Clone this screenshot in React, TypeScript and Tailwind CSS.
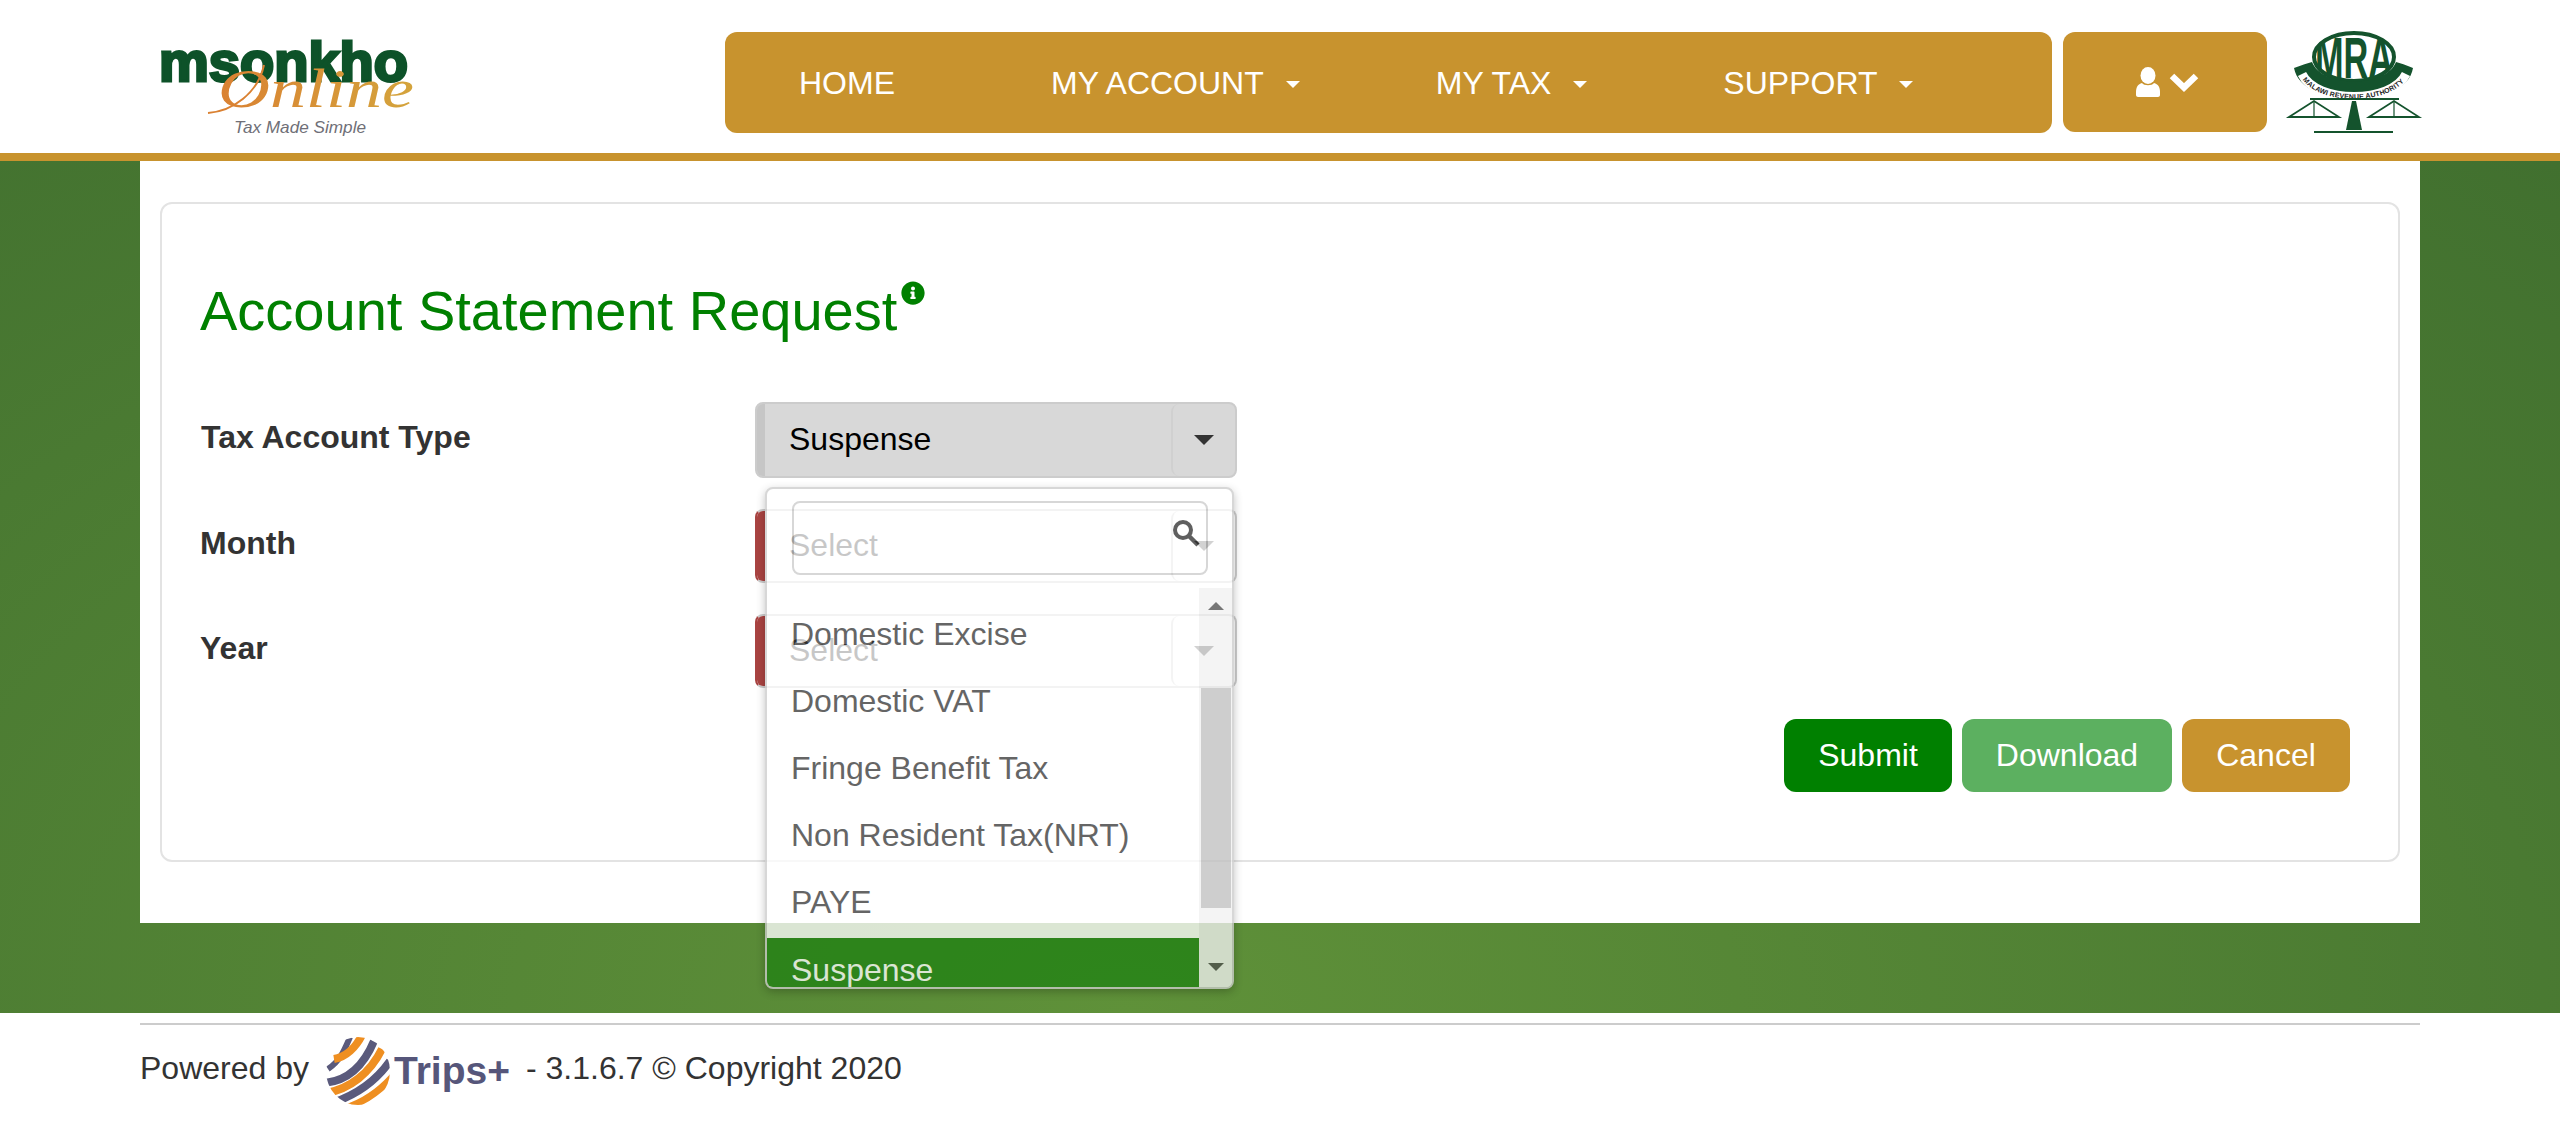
import React from "react";
import { FaInfoCircle } from "react-icons/fa";

const OPTIONS = ["Domestic Excise", "Domestic VAT", "Fringe Benefit Tax", "Non Resident Tax(NRT)", "PAYE"];

function MsonkhoLogo() {
  return (
    <svg viewBox="0 0 255 92" className="w-[255px] h-[92px] shrink-0 ml-[158px] overflow-visible">
      <defs>
        <linearGradient id="onl" x1="0" x2="1" y1="0" y2="0">
          <stop offset="0" stopColor="#da8132" />
          <stop offset="1" stopColor="#d4a43c" />
        </linearGradient>
      </defs>
      <text x="1" y="38" fontFamily="'Liberation Sans', sans-serif" fontWeight="700" fontSize="56" textLength="249" lengthAdjust="spacingAndGlyphs" fill="#0d5229" stroke="#0d5229" strokeWidth="3">msonkho</text>
      <text x="60" y="64" fontFamily="'Liberation Serif', serif" fontStyle="italic" fontSize="54" textLength="196" lengthAdjust="spacingAndGlyphs" fill="url(#onl)">Online</text>
      <path d="M50 70 C75 68 100 50 106 22" fill="none" stroke="#da8132" strokeWidth="2" />
      <text x="76" y="90" fontFamily="'Liberation Sans', sans-serif" fontStyle="italic" fontSize="17" textLength="132" lengthAdjust="spacingAndGlyphs" fill="#6f6f77">Tax Made Simple</text>
    </svg>
  );
}

function MraLogo() {
  return (
    <svg viewBox="0 0 132 101" className="w-[132px] h-[101px] shrink-0 ml-[21px] overflow-visible">
      <defs>
        <clipPath id="mraClip">
          <ellipse cx="66" cy="25" rx="42" ry="25" />
        </clipPath>
      </defs>
      <ellipse cx="66" cy="25" rx="40" ry="24" fill="#fff" stroke="#14532d" strokeWidth="4" />
      <g clipPath="url(#mraClip)">
        <text x="66" y="46" textAnchor="middle" fontFamily="'Liberation Sans', sans-serif" fontWeight="700" fontSize="58" textLength="78" lengthAdjust="spacingAndGlyphs" fill="#14532d">MRA</text>
      </g>
      <path d="M6 36 C14 33 20 31 24 30 C34 56 98 56 108 30 C112 31 118 33 125 36 C118 78 14 78 6 36Z" fill="#14532d" />
      <path id="mraArc" d="M14 42 C28 72 104 72 118 42" fill="none" stroke="#fff" strokeWidth="9" />
      <text fontFamily="'Liberation Sans', sans-serif" fontWeight="700" fontSize="7" fill="#222" dy="2.5">
        <textPath href="#mraArc" startOffset="4%">MALAWI REVENUE AUTHORITY</textPath>
      </text>
      <path d="M22 67H111" stroke="#14532d" strokeWidth="2" />
      <path d="M64 69H68L74 98H58Z" fill="#14532d" />
      <path d="M26 100H105" stroke="#14532d" strokeWidth="2" />
      <path d="M1 85L26 69L51 85ZM81 85L106 69L131 85Z" fill="none" stroke="#14532d" strokeWidth="1.8" />
      <path d="M26 69V85M106 69V85" stroke="#14532d" strokeWidth="1.2" />
    </svg>
  );
}

function TripsLogo() {
  return (
    <span className="inline-flex items-center ml-[17px] mr-[16px] mt-[6px]">
      <svg viewBox="0 0 64 68" className="w-[64px] h-[68px] shrink-0">
        <defs>
          <clipPath id="egg">
            <ellipse cx="32" cy="34" rx="32" ry="34" />
          </clipPath>
        </defs>
        <g clipPath="url(#egg)" fill="none">
          <path d="M2 32C14 24 18 14 24 0" stroke="#5a5a7c" strokeWidth="6" />
          <path d="M8 22C20 20 30 10 36 -2" stroke="#ef8f21" strokeWidth="8" />
          <path d="M-2 46C22 44 38 28 48 4" stroke="#5a5a7c" strokeWidth="8" />
          <path d="M0 56C24 52 44 36 56 12" stroke="#ef8f21" strokeWidth="8" />
          <path d="M6 66C30 58 50 44 64 24" stroke="#5a5a7c" strokeWidth="8" />
          <path d="M16 72C38 66 54 54 68 38" stroke="#ef8f21" strokeWidth="7" />
        </g>
      </svg>
      <span className="ml-[4px] text-[39px] leading-[38px] font-bold text-[#56567a]">Trips+</span>
    </span>
  );
}

function NavItem({ label, caret = true, extra = "" }: { label: string; caret?: boolean; extra?: string }) {
  return (
    <span className={`inline-flex items-center text-white text-[32px] leading-[36px] ${extra}`}>
      {label}
      {caret && <span className="ml-[22px] mt-[4px] w-0 h-0 border-x-[7px] border-t-[7px] border-x-transparent border-t-white" />}
    </span>
  );
}

function SelectBox({ text, error, height }: { text: string; error?: boolean; height: string }) {
  return (
    <div className={`w-[482px] ${height} flex rounded-lg overflow-hidden border-2 ${error ? "border-[#ccc] border-l-[#a94442] bg-white" : "border-[#ccc] bg-[#d8d8d8]"}`}>
      <div className={`w-[8px] shrink-0 ${error ? "bg-[#a94442]" : "bg-[#c6c6c6]"}`} />
      <div className="flex-1 pl-[24px] pb-[2px] flex items-center text-[32px] text-black">{text}</div>
      <div className="w-[64px] shrink-0 flex items-center justify-center border-l-2 border-[#d0d0d0] rounded-l-lg">
        <span className="w-0 h-0 border-x-[10px] border-t-[10px] border-x-transparent border-t-[#333]" />
      </div>
    </div>
  );
}

function Dropdown() {
  return (
    <div className="absolute left-[10px] top-[85px] w-[469px] h-[502px] z-10 flex flex-col bg-white border-2 border-[#ccc] rounded-lg overflow-hidden shadow-[0_3px_8px_rgba(0,0,0,0.3)] opacity-[0.78]">
      <div className="h-[99px] shrink-0 relative pt-[12px] pl-[25px]">
        <div className="w-[416px] h-[74px] border-2 border-[#ccc] rounded-lg bg-white flex justify-end pt-[16px] pr-[6px]">
          <svg viewBox="0 0 28 28" className="w-[28px] h-[28px]">
            <circle cx="11" cy="11" r="8" fill="none" stroke="#333" strokeWidth="4" />
            <path d="M17 17L26 26" stroke="#333" strokeWidth="4.5" />
          </svg>
        </div>
      </div>
      <div className="flex-1 min-h-0 flex">
        <div className="flex-1 pt-[14px] overflow-hidden text-[32px] leading-[65px] text-[#3b3b3b]">
          {OPTIONS.map((o) => (
            <div key={o} className="pl-[24px] h-[67px]">{o}</div>
          ))}
          <div className="pl-[24px] h-[67px] mt-[1px] bg-[#218214] text-white">Suspense</div>
        </div>
        <div className="w-[33px] shrink-0 bg-[#f1f1f1] flex flex-col items-center">
          <div className="h-[100px] w-full flex justify-center pt-[14px]">
            <span className="w-0 h-0 border-x-[8px] border-b-[8px] border-x-transparent border-b-[#505050]" />
          </div>
          <div className="w-[30px] h-[220px] bg-[#c1c1c1]" />
          <div className="flex-1 w-full flex justify-center items-end pb-[16px]">
            <span className="w-0 h-0 border-x-[8px] border-t-[8px] border-x-transparent border-t-[#505050]" />
          </div>
        </div>
      </div>
    </div>
  );
}

export default function App() {
  return (
    <div className="w-[2560px] h-[1132px] overflow-hidden bg-white font-['Liberation_Sans',sans-serif] text-[#333]">
      <header className="h-[161px] box-border border-b-8 border-[#c8932e] flex items-start pt-[32px]">
        <div className="mt-[11px] flex"><MsonkhoLogo /></div>
        <nav className="ml-[312px] w-[1327px] h-[101px] rounded-xl bg-[#c8932e] pl-[74px] flex items-center gap-[136px]">
          <NavItem label="HOME" caret={false} extra="pr-[20px]" />
          <NavItem label="MY ACCOUNT" />
          <NavItem label="MY TAX" />
          <NavItem label="SUPPORT" />
        </nav>
        <div className="ml-[11px] w-[204px] h-[100px] rounded-xl bg-[#c8932e] flex items-center justify-center gap-[9px] pl-[5px]">
          <svg viewBox="0 0 24 30" className="w-[24px] h-[30px]">
            <ellipse cx="12" cy="8.5" rx="7.5" ry="8.5" fill="#fff" />
            <path d="M6 16C8 19 16 19 18 16C22 17 24 20 24 25V28C24 29 23 30 22 30H2C1 30 0 29 0 28V25C0 20 2 17 6 16Z" fill="#fff" />
          </svg>
          <svg viewBox="0 0 30 20" className="w-[30px] h-[20px]">
            <path d="M3 4L15 15.5L27 4" fill="none" stroke="#fff" strokeWidth="6.5" />
          </svg>
        </div>
        <MraLogo />
      </header>

      <main className="h-[852px] bg-[radial-gradient(ellipse_farthest-corner_at_44%_100%,#5f9139_0%,#41702f_100%)]">
        <div className="mx-[140px] h-[762px] bg-white pt-[41px] px-[20px]">
          <div className="h-[660px] border-2 border-[#e3e3e3] rounded-xl px-[38px]">
            <h1 className="pt-[69px] h-[198px] text-[56px] leading-[76px] text-[#008000] font-normal flex items-start">
              Account Statement Request
              <FaInfoCircle className="ml-[4px] mt-[8px] text-[24px] shrink-0" />
            </h1>
            <div className="flex flex-col gap-[31px]">
              <div className="flex">
                <label className="w-[555px] pt-[17px] pl-[1px] text-[32px] leading-[36px] font-bold">Tax Account Type</label>
                <div className="relative">
                  <SelectBox text="Suspense" height="h-[76px]" />
                  <Dropdown />
                </div>
              </div>
              <div className="flex">
                <label className="w-[555px] pt-[16px] text-[32px] leading-[36px] font-bold">Month</label>
                <SelectBox text="Select" error height="h-[74px]" />
              </div>
              <div className="flex">
                <label className="w-[555px] pt-[16px] text-[32px] leading-[36px] font-bold">Year</label>
                <SelectBox text="Select" error height="h-[74px]" />
              </div>
            </div>
            <div className="mt-[31px] pr-[10px] flex justify-end gap-[10px] text-[32px] text-white">
              <button className="w-[168px] h-[73px] pb-[2px] rounded-xl bg-[#008000]">Submit</button>
              <button className="w-[210px] h-[73px] pb-[2px] rounded-xl bg-[#5cb060]">Download</button>
              <button className="w-[168px] h-[73px] pb-[2px] rounded-xl bg-[#c8932e]">Cancel</button>
            </div>
          </div>
        </div>
      </main>

      <footer className="mx-[140px] pt-[10px]">
        <div className="border-t-2 border-[#ccc]" />
        <div className="mt-[9px] flex items-center text-[32px] text-[#333] h-[68px]">
          <span>Powered by</span>
          <TripsLogo />
          <span>- 3.1.6.7 © Copyright 2020</span>
        </div>
      </footer>
    </div>
  );
}
